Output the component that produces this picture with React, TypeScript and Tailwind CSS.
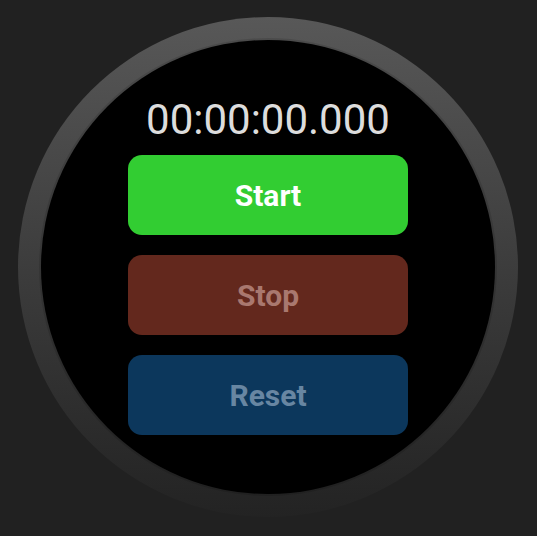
import React from 'react';

export default function App() {
  return (
    <div
      className="flex h-[536px] w-full items-center justify-center bg-[#212121] pr-px pb-[2px]"
      style={{ fontFamily: 'Roboto, "Liberation Sans", sans-serif' }}
    >
      {/* watch bezel */}
      <div className="h-[500px] w-[500px] rounded-full bg-gradient-to-b from-[#585858] to-[#232323] p-[23px]">
        <div className="flex h-full w-full flex-col items-center justify-center rounded-full bg-black shadow-[0_0_0_2px_rgba(0,0,0,0.12)]">
          <div className="mb-[14px] text-[42px] leading-none text-[#dddddd]">00:00:00.000</div>
          <button className="flex h-[80px] w-[280px] items-center justify-center rounded-[14px] bg-[#32cd32] text-[30px] font-bold text-white">
            Start
          </button>
          <button className="mt-[20px] flex h-[80px] w-[280px] items-center justify-center rounded-[14px] bg-[#63281d] text-[30px] font-bold text-[#a9786f]">
            Stop
          </button>
          <button className="mt-[20px] flex h-[80px] w-[280px] items-center justify-center rounded-[14px] bg-[#0c375c] text-[30px] font-bold text-[#6886a2]">
            Reset
          </button>
        </div>
      </div>
    </div>
  );
}
